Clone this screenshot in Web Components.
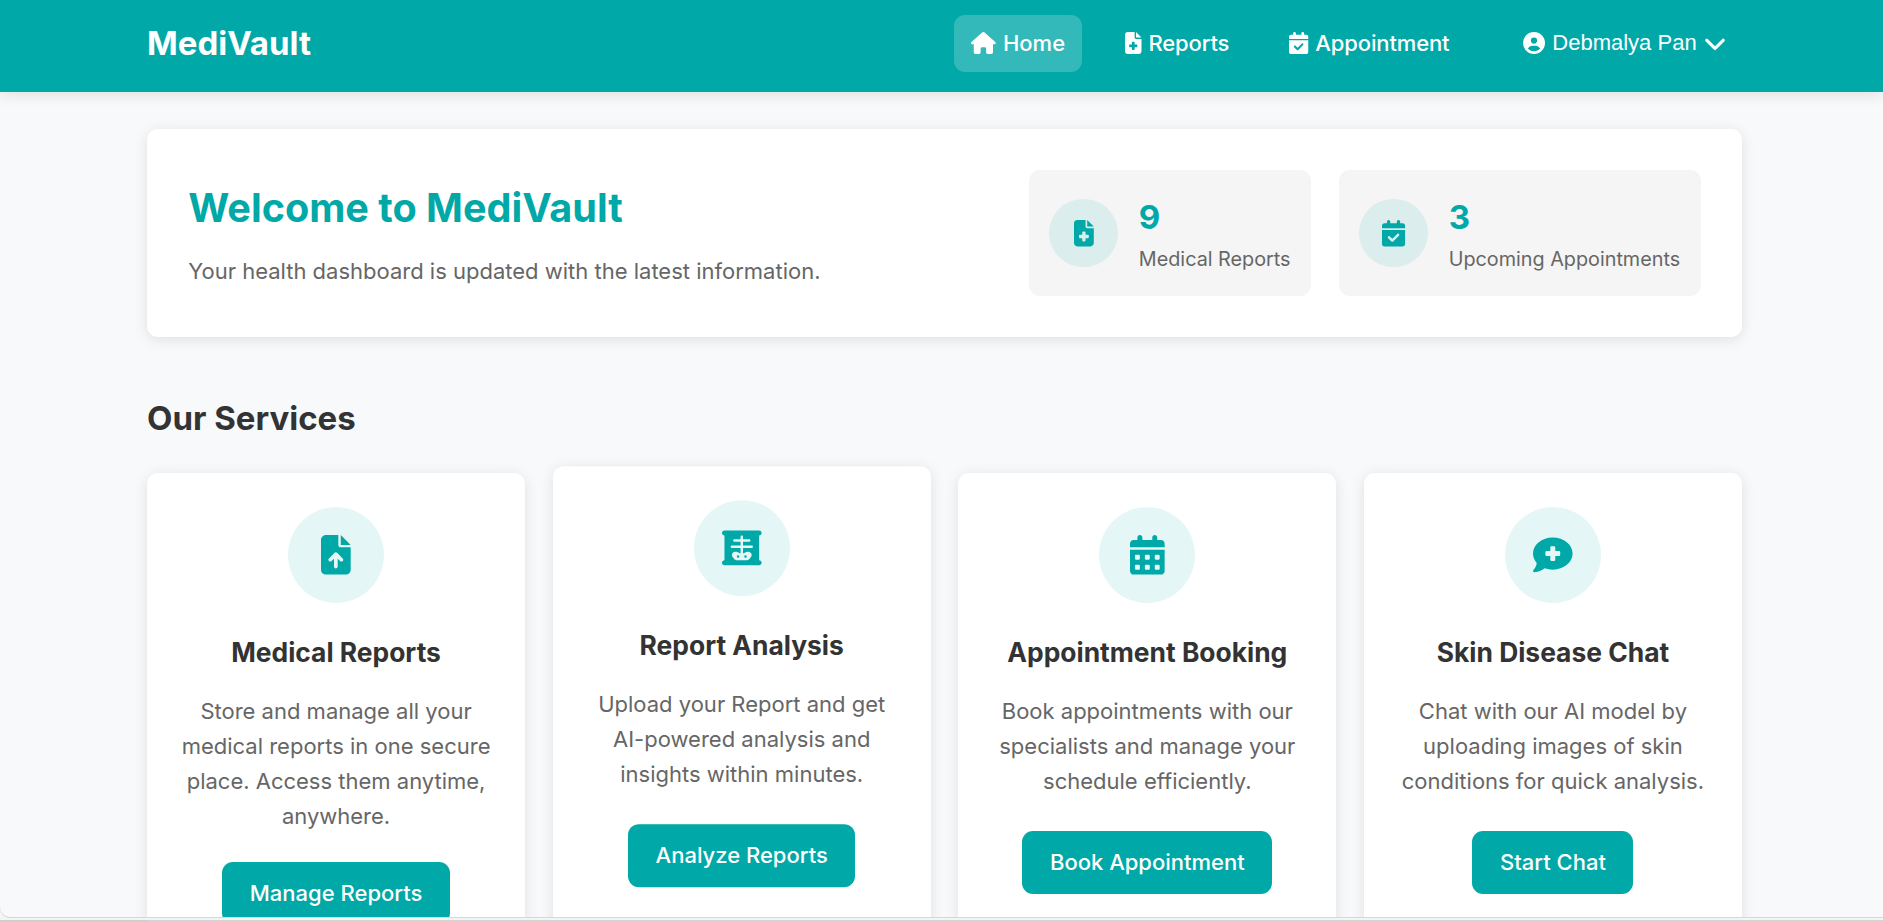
<!DOCTYPE html>
<html lang="en">
<head>
<meta charset="utf-8">
<title>MediVault</title>
<style>
html{font-size:22px}
body{margin:0;height:922px;overflow:hidden;background:#f4f4f4;font-family:Inter,"Noto Sans",sans-serif;line-height:1.6;color:#333;
--teal:#00a8a8;--muted:#666;--shadow:0 2.75px 13.75px rgba(0,0,0,.1);--u:1.375px}
</style>
</head>
<body>
<medi-app></medi-app>
<script>
const ICONS={
house:[576,'M575.8 255.500c0 18-15 32.100-32 32.100l-32 0 .7 160.200c0 2.700-.2 5.400-.5 8.100l0 16.200c0 22.100-17.900 40-40 40l-16 0c-1.100 0-2.200 0-3.300-.1c-1.400 .1-2.800 .1-4.200 .1L416 512l-24 0c-22.100 0-40-17.900-40-40l0-24 0-64c0-17.700-14.300-32-32-32l-64 0c-17.700 0-32 14.300-32 32l0 64 0 24c0 22.100-17.900 40-40 40l-24 0-31.900 0c-1.500 0-3-.1-4.500-.2c-1.200 .1-2.400 .2-3.600 .2l-16 0c-22.100 0-40-17.900-40-40l0-112c0-.9 0-1.900 .1-2.800l0-69.700-32 0c-18 0-32-14-32-32.100c0-9 3-17 10-24L266.400 8c7-7 15-8 22-8s15 2 21 7L564.800 231.500c8 7 12 15 11 24z'],
fileMedical:[384,'M64 0C28.700 0 0 28.700 0 64L0 448c0 35.300 28.700 64 64 64l256 0c35.300 0 64-28.700 64-64l0-288-128 0c-17.700 0-32-14.300-32-32L224 0 64 0zM256 0l0 128 128 0L256 0zM160 240c0-8.800 7.200-16 16-16l32 0c8.800 0 16 7.200 16 16l0 48 48 0c8.800 0 16 7.200 16 16l0 32c0 8.800-7.200 16-16 16l-48 0 0 48c0 8.800-7.200 16-16 16l-32 0c-8.800 0-16-7.200-16-16l0-48-48 0c-8.800 0-16-7.200-16-16l0-32c0-8.800 7.200-16 16-16l48 0 0-48z'],
calCheck:[448,'M128 0c17.700 0 32 14.300 32 32l0 32 128 0 0-32c0-17.700 14.300-32 32-32s32 14.300 32 32l0 32 48 0c26.500 0 48 21.500 48 48l0 48L0 160l0-48C0 85.500 21.500 64 48 64l48 0 0-32c0-17.700 14.300-32 32-32zM0 192l448 0 0 272c0 26.500-21.500 48-48 48L48 512c-26.500 0-48-21.500-48-48L0 192zM329 305c9.400-9.400 9.400-24.600 0-33.900s-24.600-9.400-33.900 0l-95 95-47-47c-9.400-9.400-24.600-9.400-33.900 0s-9.400 24.600 0 33.900l64 64c9.400 9.400 24.600 9.400 33.900 0L329 305z'],
user:[512,'M0 256a256 256 0 1 1 512 0A256 256 0 1 1 0 256zM399 384.200C376.900 345.800 335.400 320 288 320l-64 0c-47.400 0-88.900 25.800-111 64.200c35.200 39.200 86.200 63.800 143 63.800s107.800-24.700 143-63.800zM256 272a72 72 0 1 0 0-144 72 72 0 1 0 0 144z'],
chevron:[512,'M233.400 406.600c12.500 12.500 32.800 12.500 45.300 0l192-192c12.500-12.500 12.500-32.800 0-45.300s-32.800-12.500-45.300 0L256 338.700 86.600 169.400c-12.500-12.500-32.800-12.500-45.300 0s-12.500 32.800 0 45.300l192 192z'],
fileUp:[384,'M64 0C28.700 0 0 28.700 0 64L0 448c0 35.300 28.700 64 64 64l256 0c35.300 0 64-28.700 64-64l0-288-128 0c-17.700 0-32-14.300-32-32L224 0 64 0zM256 0l0 128 128 0L256 0zM216 408c0 13.300-10.700 24-24 24s-24-10.700-24-24l0-102.100-31 31c-9.400 9.400-24.600 9.400-33.900 0s-9.400-24.600 0-33.900l72-72c9.400-9.400 24.600-9.400 33.900 0l72 72c9.400 9.400 9.400 24.600 0 33.900s-24.600 9.400-33.900 0l-31-31L216 408z'],
xray:[512,'M0 64C0 46.300 14.300 32 32 32l448 0c17.700 0 32 14.300 32 32s-14.300 32-32 32l0 320c17.700 0 32 14.300 32 32s-14.300 32-32 32L32 480c-17.700 0-32-14.300-32-32s14.300-32 32-32L32 96C14.300 96 0 81.700 0 64zM256 96c-8.800 0-16 7.200-16 16l0 32-80 0c-8.800 0-16 7.200-16 16s7.200 16 16 16l80 0 0 48-112 0c-8.800 0-16 7.200-16 16s7.200 16 16 16l112 0 0 70.600L189.100 307c-5.200-2-10.600-3-16.200-3l-2.100 0c-23.600 0-42.800 19.200-42.800 42.800c0 9.600 3.200 18.900 9.100 26.400l18.200 23.200c9.700 12.400 24.600 19.600 40.300 19.600l120.800 0c15.700 0 30.600-7.200 40.300-19.600l18.200-23.200c5.900-7.500 9.100-16.800 9.100-26.400c0-23.600-19.200-42.800-42.800-42.800l-2.200 0c-5.500 0-11 1-16.200 3L272 326.600l0-70.600 112 0c8.800 0 16-7.200 16-16s-7.200-16-16-16l-112 0 0-48 80 0c8.800 0 16-7.200 16-16s-7.200-16-16-16l-80 0 0-32c0-8.800-7.200-16-16-16zM208 352a16 16 0 1 1 0 32 16 16 0 1 1 0-32zm80 16a16 16 0 1 1 32 0 16 16 0 1 1 -32 0z'],
calendar:[448,'M96 32l0 32L48 64C21.500 64 0 85.500 0 112l0 48 448 0 0-48c0-26.500-21.500-48-48-48l-48 0 0-32c0-17.700-14.300-32-32-32s-32 14.300-32 32l0 32L160 64l0-32c0-17.700-14.300-32-32-32S96 14.300 96 32zM448 192L0 192 0 464c0 26.500 21.500 48 48 48l352 0c26.500 0 48-21.500 48-48l0-272zM64 272c0-8.800 7.200-16 16-16l32 0c8.800 0 16 7.200 16 16l0 32c0 8.800-7.200 16-16 16l-32 0c-8.800 0-16-7.200-16-16l0-32zm128 0c0-8.800 7.200-16 16-16l32 0c8.800 0 16 7.200 16 16l0 32c0 8.800-7.200 16-16 16l-32 0c-8.800 0-16-7.200-16-16l0-32zm144-16l32 0c8.800 0 16 7.200 16 16l0 32c0 8.800-7.200 16-16 16l-32 0c-8.800 0-16-7.200-16-16l0-32c0-8.800 7.200-16 16-16zM64 400c0-8.800 7.200-16 16-16l32 0c8.800 0 16 7.200 16 16l0 32c0 8.800-7.200 16-16 16l-32 0c-8.800 0-16-7.200-16-16l0-32zm144-16l32 0c8.800 0 16 7.200 16 16l0 32c0 8.800-7.200 16-16 16l-32 0c-8.800 0-16-7.200-16-16l0-32c0-8.800 7.200-16 16-16zm112 16c0-8.800 7.200-16 16-16l32 0c8.800 0 16 7.200 16 16l0 32c0 8.800-7.200 16-16 16l-32 0c-8.800 0-16-7.200-16-16l0-32z'],
comment:[512,'M256 448c141.400 0 256-93.100 256-208S397.400 32 256 32S0 125.100 0 240c0 45.100 17.700 86.800 47.700 120.900c-1.900 24.500-11.400 46.300-21.400 62.900c-5.500 9.200-11.100 16.600-15.200 21.600c-2.100 2.500-3.700 4.400-4.900 5.700c-.6 .6-1 1.100-1.300 1.400l-.3 .3c-4.600 4.600-5.900 11.400-3.400 17.400c2.500 6 8.300 9.900 14.800 9.900c28.700 0 57.600-8.900 81.600-19.300c22.900-10 42.400-21.900 54.300-30.600c31.800 11.500 67 17.900 104.100 17.900zM224 160c0-8.800 7.200-16 16-16l32 0c8.800 0 16 7.200 16 16l0 48 48 0c8.800 0 16 7.200 16 16l0 32c0 8.800-7.200 16-16 16l-48 0 0 48c0 8.800-7.200 16-16 16l-32 0c-8.800 0-16-7.200-16-16l0-48-48 0c-8.800 0-16-7.200-16-16l0-32c0-8.800 7.200-16 16-16l48 0 0-48z']
};
const define=(name,html)=>customElements.define(name,class extends HTMLElement{
  connectedCallback(){
    if(this.shadowRoot)return;
    this.attachShadow({mode:'open'}).innerHTML=typeof html==='function'?html(this):html;
  }
});

define('medi-icon',el=>{
  const [w,d]=ICONS[el.getAttribute('name')];
  return `<style>:host{display:inline-block;flex:none;height:1em;line-height:1}svg{display:block;height:1em;width:${w/512}em;fill:currentColor;overflow:visible}:host([name=chevron]) path{stroke:currentColor;stroke-width:10}</style>
  <svg viewBox="0 0 ${w} 512" aria-hidden="true"><path fill-rule="evenodd" d="${d}"/></svg>`;
});

define('nav-item',`<style>
:host{display:flex;align-items:center;gap:7.3px;padding:calc(8*var(--u)) calc(12*var(--u));border-radius:calc(8*var(--u));color:#fff;font-weight:500;letter-spacing:-.13px;white-space:nowrap}
:host([active]){background:rgba(255,255,255,.2);letter-spacing:0}
::slotted(medi-icon){margin-top:-1px}
</style><slot name="icon"></slot><span><slot></slot></span>`);

define('user-menu',`<style>
:host{display:block;color:#fff}
button{all:unset;display:flex;align-items:center;gap:calc(5*var(--u));padding:0 calc(12*var(--u)) 1px;font:1rem/1.6 "Liberation Sans",Arial,sans-serif;white-space:nowrap}
span{padding-bottom:1px}
</style><button><medi-icon name="user"></medi-icon><span><slot></slot></span><medi-icon name="chevron"></medi-icon></button>`);

define('app-header',`<style>
:host{display:block;background:var(--teal);box-shadow:var(--shadow);position:relative}
.bar{display:flex;align-items:center;justify-content:space-between;width:1595px;height:57px;margin-left:147px;padding:15px 0 20px}
.brand{font-size:1.5rem;font-weight:700;color:#fff}
nav{display:flex;align-items:center;gap:26.5px}
user-menu{margin-left:14.5px}
</style>
<div class="bar"><div class="brand">MediVault</div><nav>
<nav-item active><medi-icon slot="icon" name="house"></medi-icon>Home</nav-item>
<nav-item><medi-icon slot="icon" name="fileMedical"></medi-icon>Reports</nav-item>
<nav-item><medi-icon slot="icon" name="calCheck"></medi-icon>Appointment</nav-item>
<user-menu>Debmalya Pan</user-menu></nav></div>`);

define('stat-card',el=>`<style>
:host{display:flex;align-items:center;gap:calc(15*var(--u));padding:calc(15*var(--u));background:#f5f5f5;border-radius:calc(8*var(--u))}
.badge{display:flex;align-items:center;justify-content:center;width:calc(50*var(--u));height:calc(50*var(--u));border-radius:50%;background:rgba(0,168,168,.1);color:var(--teal);font-size:1.2rem}
.value{font-size:1.5rem;font-weight:700;color:var(--teal)}
.label{font-size:.9rem;color:var(--muted);white-space:nowrap}
</style><div class="badge"><medi-icon name="${el.getAttribute('icon')}"></medi-icon></div>
<div><div class="value">${el.getAttribute('value')}</div><div class="label"><slot></slot></div></div>`);

define('welcome-banner',`<style>
:host{display:flex;align-items:center;justify-content:space-between;background:#fff;border-radius:calc(8*var(--u));box-shadow:var(--shadow);padding:calc(30*var(--u))}
h1{margin:0 0 calc(10*var(--u));font-size:1.8rem;font-weight:700;color:var(--teal)}
p{margin:0;color:var(--muted)}
.stats{display:flex;gap:calc(20*var(--u))}
</style><div><h1>Welcome to MediVault</h1><p>Your health dashboard is updated with the latest information.</p></div>
<div class="stats"><slot></slot></div>`);

define('service-card',el=>`<style>
:host{display:block;box-sizing:border-box;background:#fff;border-radius:calc(8*var(--u));box-shadow:var(--shadow);padding:calc(25*var(--u));text-align:center}
:host([raised]){transform:translateY(calc(-5*var(--u)))}
.badge{display:flex;align-items:center;justify-content:center;width:calc(70*var(--u));height:calc(70*var(--u));margin:0 auto calc(20*var(--u));border-radius:50%;background:rgba(0,168,168,.1);color:var(--teal);font-size:1.8rem}
h3{margin:0 0 calc(15*var(--u));font-size:1.2rem;font-weight:700}
p{margin:0 0 calc(20*var(--u));min-height:calc(80*var(--u));color:var(--muted)}
a{display:inline-block;padding:calc(10*var(--u)) calc(20*var(--u));border-radius:calc(8*var(--u));background:var(--teal);color:#fff;font-weight:500}
</style><div class="badge"><medi-icon name="${el.getAttribute('icon')}"></medi-icon></div>
<h3>${el.getAttribute('heading')}</h3><p><slot></slot></p><a>${el.getAttribute('action')}</a>`);

define('window-edge',`<style>
:host{display:flex;height:5px;box-sizing:border-box;padding-top:3px}
i{background:#d4d4d4;flex:1}
i:first-child{flex:none;width:7px;background:#e6e6e6;border-right:1px solid #c4c4c4}
i:nth-child(2){flex:none;width:147px;background:#cfcfcf}
</style><i></i><i></i><i></i>`);

define('medi-app',`<style>
:host{display:flex;flex-direction:column;height:922px}
.page{height:917px;box-sizing:border-box;overflow:hidden;background:#f8f9fb;border-radius:0 0 0 10px;box-shadow:0 1px 0 #d8d8d8;position:relative}
main{width:1595px;margin:37px 0 0 147px}
h2{margin:calc(40*var(--u)) 0 calc(20*var(--u));font-size:1.5rem;font-weight:700}
.grid{display:grid;grid-template-columns:repeat(4,1fr);gap:calc(20*var(--u))}
</style>
<div class="page"><app-header></app-header><main>
<welcome-banner><stat-card icon="fileMedical" value="9">Medical Reports</stat-card><stat-card icon="calCheck" value="3">Upcoming Appointments</stat-card></welcome-banner>
<h2>Our Services</h2>
<div class="grid">
<service-card icon="fileUp" heading="Medical Reports" action="Manage Reports">Store and manage all your medical reports in one secure place. Access them anytime, anywhere.</service-card>
<service-card raised icon="xray" heading="Report Analysis" action="Analyze Reports">Upload your Report and get AI-powered analysis and insights within minutes.</service-card>
<service-card icon="calendar" heading="Appointment Booking" action="Book Appointment">Book appointments with our specialists and manage your schedule efficiently.</service-card>
<service-card icon="comment" heading="Skin Disease Chat" action="Start Chat">Chat with our AI model by uploading images of skin conditions for quick analysis.</service-card>
</div></main></div><window-edge></window-edge>`);
</script>
</body>
</html>
